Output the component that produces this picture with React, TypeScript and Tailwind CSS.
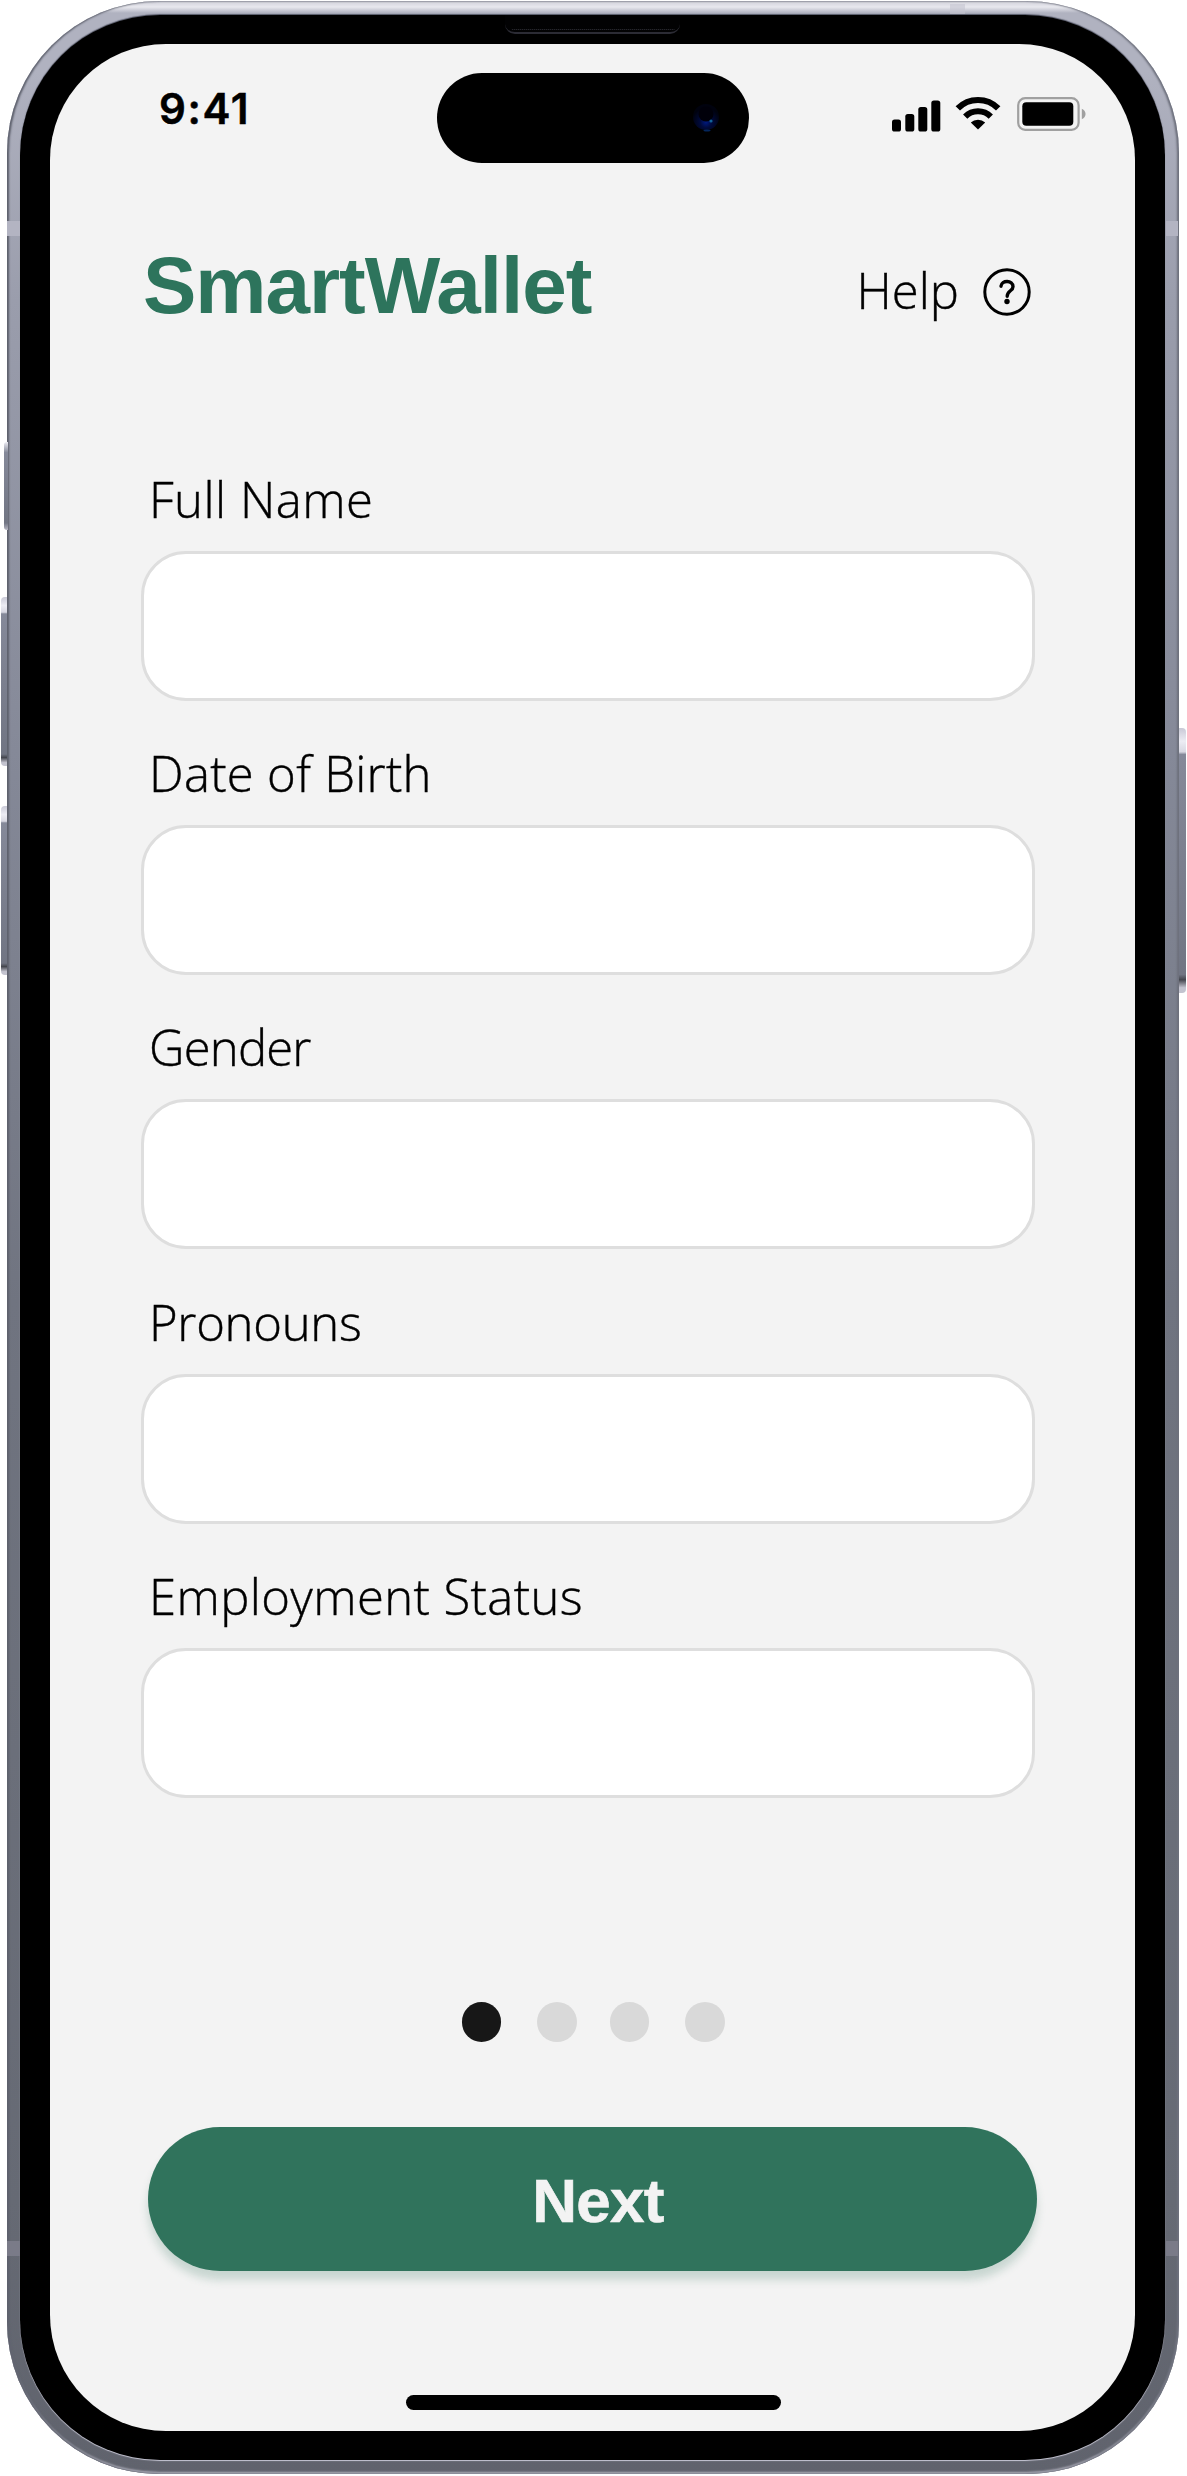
const fields = [
  { id: "full-name", label: "Full Name", tracking: "tracking-[0.5px]" },
  { id: "date-of-birth", label: "Date of Birth", tracking: "tracking-[0.3px]" },
  { id: "gender", label: "Gender", tracking: "tracking-[-0.8px]" },
  { id: "pronouns", label: "Pronouns", tracking: "tracking-[-0.3px]" },
  { id: "employment", label: "Employment Status", tracking: "tracking-[0.4px]" },
];

function SignalIcon() {
  return (
    <svg width="49" height="32" viewBox="0 0 49 32" fill="#000">
      <rect x="0" y="19.5" width="9" height="12" rx="2.6" />
      <rect x="13.3" y="14" width="9" height="17.5" rx="2.6" />
      <rect x="26.3" y="7" width="9" height="24.5" rx="2.6" />
      <rect x="39.3" y="0.5" width="9" height="31" rx="2.6" />
    </svg>
  );
}

function WifiIcon() {
  return (
    <svg width="46" height="34" viewBox="0 0 46 34" fill="none" stroke="#000">
      <path d="M2.8 12.4a28.5 28.5 0 0 1 40.4 0" strokeWidth="6.2" />
      <path d="M10.2 20.6a18 18 0 0 1 25.6 0" strokeWidth="6" />
      <path d="M23 33.4l-7.2-6.8a10.4 10.4 0 0 1 14.4 0z" fill="#000" stroke="none" />
    </svg>
  );
}

function BatteryIcon() {
  return (
    <svg width="70" height="34" viewBox="0 0 70 34">
      <rect x="1.2" y="1.2" width="60.4" height="31.6" rx="7" fill="none" stroke="#a0a0a0" strokeWidth="2.2" />
      <rect x="5.3" y="5.3" width="51" height="23.4" rx="4" fill="#000" />
      <path d="M64.8 11.8c5 2 5 8.4 0 10.4z" fill="#a0a0a0" />
    </svg>
  );
}

function HelpIcon() {
  return (
    <svg width="48" height="48" viewBox="0 0 48 48" fill="none" stroke="#000">
      <circle cx="24" cy="24" r="22.2" strokeWidth="3" />
      <path d="M18 18.2C18.5 11.8 30 11.8 30 18.7C30 23 24.2 22.7 24.2 28.3" strokeWidth="3.4" strokeLinecap="round" />
      <circle cx="24" cy="33.5" r="2.7" fill="#000" stroke="none" />
    </svg>
  );
}

function SideButtons() {
  const key =
    "absolute bg-[linear-gradient(#c9c9d6,#ececf3_5%,#d8d8e2_9%,#858999_10%,#717583_93%,#44464e_95%,#c3c3cf_98%)]";
  return (
    <>
      <div className="absolute left-[4px] top-[442px] h-[88px] w-[4px] rounded-l-[3px] bg-[linear-gradient(#ececf3,#858999_12%,#717583_92%,#b5b5c2)]" />
      <div className={`${key} left-[1px] top-[597px] h-[169px] w-[6px] rounded-l-[4px]`} />
      <div className={`${key} left-[1px] top-[806px] h-[169px] w-[6px] rounded-l-[4px]`} />
      <div className={`${key} left-[1179px] top-[728px] h-[265px] w-[7px] rounded-r-[4px]`} />
    </>
  );
}

function AntennaBands() {
  return (
    <>
      <div className="absolute left-[7px] top-[221px] h-[15px] w-[13px] bg-[#b3b4c2]" />
      <div className="absolute left-[1166px] top-[221px] h-[15px] w-[12px] bg-[#b3b4c2]" />
      <div className="absolute left-[7px] top-[2241px] h-[15px] w-[13px] bg-[#7a7b88]" />
      <div className="absolute left-[1166px] top-[2241px] h-[15px] w-[12px] bg-[#7a7b88]" />
      <div className="absolute left-[950px] top-[4px] h-[10px] w-[15px] bg-[#c4c5d0]/60" />
    </>
  );
}

function StatusBar() {
  return (
    <div className="flex h-[136px] items-start">
      <span className="ml-[109px] mt-[40px] w-[278px] font-['Inter'] text-[42px] font-semibold leading-[50px] tracking-[1.6px] text-black [-webkit-text-stroke:0.5px_#000]">
        9:41
      </span>
      {/* Dynamic island */}
      <div className="mt-[29px] flex h-[90px] w-[312px] items-center justify-end rounded-full bg-black pr-[29px]">
        <svg width="28" height="28" viewBox="0 0 28 28">
          <defs>
            <radialGradient id="lens" cx="0.5" cy="0.7" r="0.55">
              <stop offset="0" stopColor="#001a80" />
              <stop offset="0.4" stopColor="#000a3c" />
              <stop offset="1" stopColor="#00020e" />
            </radialGradient>
          </defs>
          <circle cx="14" cy="13" r="13" fill="url(#lens)" />
          <circle cx="14" cy="10" r="7.5" fill="#00000a" />
          <circle cx="19" cy="17" r="1.6" fill="#12649c" />
          <ellipse cx="15" cy="26.5" rx="3.5" ry="1" fill="#04265c" />
        </svg>
      </div>
      <div className="ml-[143px] mt-[52px] flex items-start">
        <div className="mt-[4px]">
          <SignalIcon />
        </div>
        <div className="ml-[14px]">
          <WifiIcon />
        </div>
        <div className="ml-[16px] mt-[1px]">
          <BatteryIcon />
        </div>
      </div>
    </div>
  );
}

function Field({ id, label, tracking }: { id: string; label: string; tracking: string }) {
  return (
    <div className="flex h-[274.2px] flex-col">
      <label
        htmlFor={id}
        className={`-mt-[1px] ml-[8px] h-[82px] whitespace-nowrap font-['Open_Sans'] text-[49px] font-light leading-[60px] text-black [-webkit-text-stroke:0.4px_#000] ${tracking}`}
      >
        {label}
      </label>
      <input
        id={id}
        type="text"
        className="h-[150px] w-[894px] rounded-[45px] border-[3px] border-[#dedede] bg-white px-10 text-[44px] outline-none"
      />
    </div>
  );
}

export default function App() {
  return (
    <div className="relative h-[2476px] w-[1187px] overflow-hidden bg-white pl-[7px] pt-[1px]">
      <SideButtons />
      {/* Metal frame */}
      <div className="h-[2473px] w-[1172px] rounded-[152px] bg-[linear-gradient(#d0d0da,#e8e8ee_6px,#b0b2c0_12px,#b0b2c0_70px,#9a9dac_300px,#858998_750px,#707480_1300px,#666a74_2200px,#60636d)] px-[13px] pt-[14px] shadow-[inset_2px_0_2px_#5d606c,inset_-2px_0_2px_#6d707c,inset_0_-2px_2px_#b4b4c0]">
        <div className="h-[2445px] w-[1145px] rounded-[140px] bg-black px-[30px] pt-[29px] shadow-[0_1px_1px_#c8c8d6,0_-1px_1px_#565968]">
          <div className="flex h-[2387px] w-[1085px] flex-col overflow-hidden rounded-[116px] bg-[#f3f3f3]">
            <StatusBar />

            <header className="flex h-[293px] items-start justify-between pl-[93px] pr-[104px]">
              <h1 className="mt-[61px] font-['Liberation_Sans'] text-[80px] font-bold leading-[90px] tracking-[-1px] text-[#2d745c]">
                SmartWallet
              </h1>
              <button className="mt-[82px] flex h-[60px] items-center gap-[24px]">
                <span className="-mt-[5px] font-['Open_Sans'] text-[49px] font-light leading-[60px] text-black [-webkit-text-stroke:0.4px_#000]">
                  Help
                </span>
                <HelpIcon />
              </button>
            </header>

            <form className="ml-[91px] mt-[-3px] flex h-[1532px] flex-col">
              {fields.map((field) => (
                <Field key={field.id} {...field} />
              ))}
            </form>

            <div className="ml-[411.5px] flex h-[124px] gap-[36px]">
              <span className="h-[39.5px] w-[39.5px] rounded-full bg-[#171717]" />
              <span className="h-[39.5px] w-[39.5px] rounded-full bg-[#d9d9d9]" />
              <span className="-ml-[3px] h-[39.5px] w-[39.5px] rounded-full bg-[#d9d9d9]" />
              <span className="h-[39.5px] w-[39.5px] rounded-full bg-[#d9d9d9]" />
            </div>

            <button className="ml-[98px] mt-[0.5px] h-[144.5px] w-[889px] shrink-0 rounded-full bg-[#30735c] pl-[11px] pt-[4px] font-['Liberation_Sans'] text-[62px] font-bold tracking-[-0.7px] text-[#f3f3f3] shadow-[0_9px_8px_rgba(48,115,92,0.22)] [-webkit-text-stroke:0.6px_#f3f3f3]">
              Next
            </button>

            <div className="ml-[355.5px] mt-[124px] h-[15px] w-[375px] shrink-0 rounded-full bg-black" />
          </div>
        </div>
      </div>
      <AntennaBands />
      {/* Earpiece */}
      <div className="absolute left-[505px] top-[15px] h-[19px] w-[175px] rounded-b-[10px] border-b-2 border-[#2b2b34] bg-[#020203]">
        <div className="mx-auto mt-[12px] h-[3px] w-[164px] rounded-full border-b border-dotted border-[#33333b]" />
      </div>
    </div>
  );
}
